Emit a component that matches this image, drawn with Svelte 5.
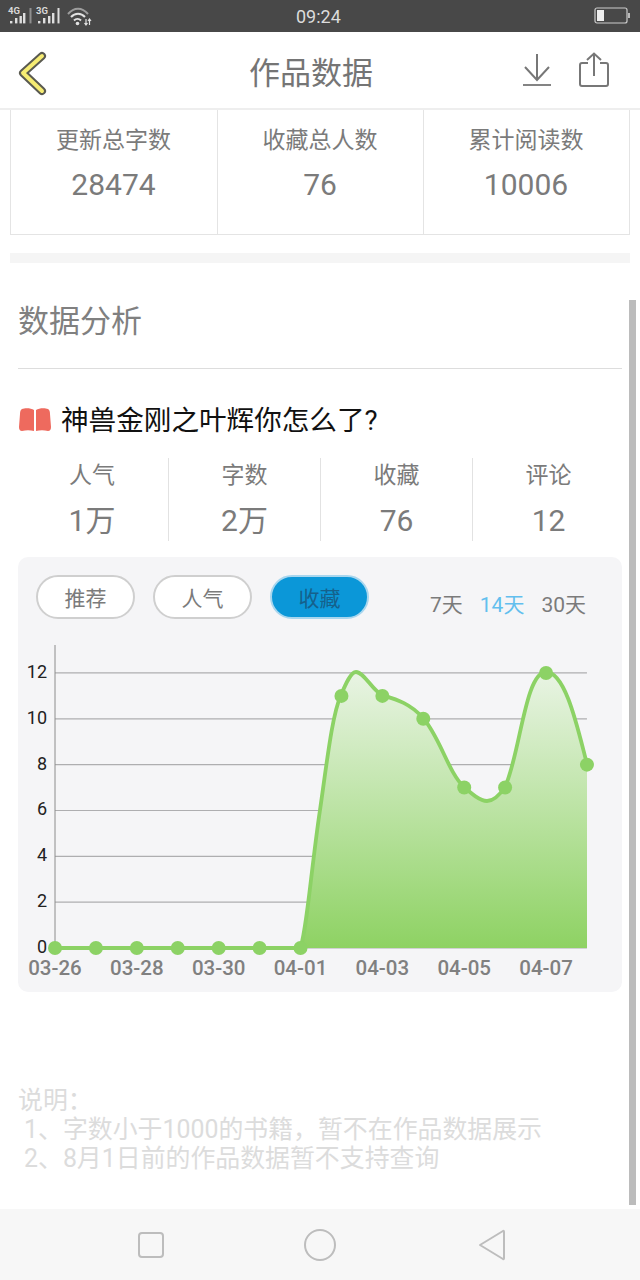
<script>
  const topStats = [
    { label: '更新总字数', value: '28474' },
    { label: '收藏总人数', value: '76' },
    { label: '累计阅读数', value: '10006' }
  ];
  const bookStats = [
    { label: '人气', value: '1万' },
    { label: '字数', value: '2万' },
    { label: '收藏', value: '76' },
    { label: '评论', value: '12' }
  ];
  const tabs = ['推荐', '人气', '收藏'];
  const ranges = ['7天', '14天', '30天'];

  // chart coordinates are relative to the card (card origin 18,557)
  const ox = 18;
  const oy = 557;
  const values = [0, 0, 0, 0, 0, 0, 0, 11, 11, 10, 7, 7, 12, 8];
  const xAt = (i) => 55 + i * 40.92 - ox;
  const yAt = (v) => 948 - v * 22.92 - oy;
  const ticks = [0, 2, 4, 6, 8, 10, 12];
  const dates = [
    { i: 0, t: '03-26' },
    { i: 2, t: '03-28' },
    { i: 4, t: '03-30' },
    { i: 6, t: '04-01' },
    { i: 8, t: '04-03' },
    { i: 10, t: '04-05' },
    { i: 12, t: '04-07' }
  ];
  const curve =
    'C306 938 311 870 320 810 C327 762 332 715 341 695 C346 683 351 672 356 672 C364 672 372 690 382 695 ' +
    'C395 699 410 703 423 718 C440 737 448 772 464 787 C472 794 480 801 487 801 ' +
    'C495 801 501 793 505 787 C520 755 525 672 546 672 C566 672 578 730 587 764';
</script>

<div class="page">
  <div class="status">
    <svg width="96" height="32" viewBox="0 0 96 32">
      <text x="8" y="14" class="net">4G</text>
      <g fill="#dedede">
        <rect x="10" y="21" width="2.4" height="2.4" />
        <rect x="15" y="18" width="2.4" height="5.4" />
        <rect x="19.5" y="16" width="2.4" height="7.4" />
        <rect x="23" y="13" width="2.4" height="10.4" />
        <rect x="29.5" y="8" width="2" height="15.4" fill="#8f8f8f" />
      </g>
      <text x="36" y="14" class="net">3G</text>
      <g fill="#dedede">
        <rect x="38" y="21" width="2.4" height="2.4" />
        <rect x="43" y="18" width="2.4" height="5.4" />
        <rect x="48" y="16" width="2.4" height="7.4" />
        <rect x="52" y="13" width="2.4" height="10.4" />
        <rect x="57.5" y="8" width="2" height="15.4" />
      </g>
      <g fill="none" stroke-width="2">
        <path d="M68 14 C74 7 82 7 88 14" stroke="#9d9d9d" />
        <path d="M71 17 C75 12.5 81 12.5 85 17" stroke="#e2e2e2" />
        <path d="M74 20.5 C76 18.5 79 18.5 81 20.5" stroke="#e2e2e2" />
      </g>
      <circle cx="77.5" cy="23.5" r="1.8" fill="#e2e2e2" />
      <path d="M86 19 V25 M84.5 23 L86 25 L87.5 23 M89.5 25 V19 M88 21 L89.5 19 L91 21" fill="none" stroke="#e2e2e2" stroke-width="1.2" />
    </svg>
    <span class="clock">09:24</span>
    <svg class="battery" width="38" height="18" viewBox="0 0 38 18">
      <rect x="1" y="1" width="32" height="15" rx="2" fill="none" stroke="#ccc" stroke-width="1.2" />
      <rect x="3" y="3" width="7" height="11" fill="#eee" />
      <rect x="34" y="6" width="2" height="5" fill="#bbb" />
    </svg>
  </div>

  <header class="topbar">
    <svg class="back" width="36" height="52" viewBox="0 0 36 52">
      <polyline points="28,12 9,29 28,47" fill="none" stroke="#5a5a50" stroke-width="8" stroke-linecap="round" stroke-linejoin="round" />
      <polyline points="28,12 9,29 28,47" fill="none" stroke="#f6ec73" stroke-width="4" stroke-linecap="round" stroke-linejoin="round" />
    </svg>
    <h1>作品数据</h1>
    <div class="actions">
      <svg width="30" height="34" viewBox="0 0 30 34" fill="none" stroke="#777" stroke-width="2">
        <path d="M15 1 V27" />
        <path d="M3 14 L15 27 L27 14" />
        <path d="M1 32 H29" stroke-width="1.8" />
      </svg>
      <svg width="32" height="36" viewBox="0 0 32 36" fill="none" stroke="#777" stroke-width="2">
        <path d="M10 11 H4 Q2 11 2 13 V32 Q2 34 4 34 H28 Q30 34 30 32 V13 Q30 11 28 11 H22" />
        <path d="M16 24 V2" />
        <path d="M9 8 L16 1.5 L23 8" />
      </svg>
    </div>
  </header>

  <main>
    <section class="totals">
      {#each topStats as s}
        <div class="total">
          <span class="total-label">{s.label}</span>
          <span class="total-value">{s.value}</span>
        </div>
      {/each}
    </section>

    <div class="band"></div>

    <h2>数据分析</h2>

    <div class="book-title">
      <svg width="34" height="24" viewBox="0 0 34 24">
        <path d="M16 2 C13 0 7 0 4 1 Q2 2 2 6 L1 19 Q1 23 4 23 C8 22 12 22 16 23 Z" fill="#ee6a5e" />
        <path d="M18 2 C21 0 27 0 30 1 Q32 2 32 6 L33 19 Q33 23 30 23 C26 22 22 22 18 23 Z" fill="#ee6a5e" />
      </svg>
      <span>神兽金刚之叶辉你怎么了?</span>
    </div>

    <div class="book-stats">
      {#each bookStats as s}
        <div class="book-stat">
          <span class="stat-label">{s.label}</span>
          <span class="stat-value">{s.value}</span>
        </div>
      {/each}
    </div>

    <div class="card">
      <div class="controls">
        <div class="tabs">
          {#each tabs as t, i}
            <button class="tab" class:active={i === 2}>{t}</button>
          {/each}
        </div>
        <div class="ranges">
          {#each ranges as r, i}
            <span class:on={i === 1}>{r}</span>
          {/each}
        </div>
      </div>

      <svg class="chart" width="604" height="347" viewBox="0 88 604 347">
        <defs>
          <linearGradient id="fill" x1="0" y1="0" x2="0" y2="1">
            <stop offset="0" stop-color="#e9f4e4" />
            <stop offset="1" stop-color="#8ed263" />
          </linearGradient>
        </defs>
        {#each ticks as t}
          <line x1={xAt(0)} x2={xAt(13)} y1={yAt(t)} y2={yAt(t)} stroke="#aeaeb0" stroke-width="1.2" />
          <text x="29" y={yAt(t) + 5} class="ytick" text-anchor="end">{t}</text>
        {/each}
        <line x1={xAt(0)} x2={xAt(0)} y1="88" y2={yAt(0)} stroke="#8c8c8c" stroke-width="1" />
        <g transform="translate({-ox} {-oy})">
          <path d="M300 948 {curve} V948 Z" fill="url(#fill)" />
          <path d="M55 948 H300 {curve}" fill="none" stroke="#8cd265" stroke-width="3.8" />
        </g>
        {#each values as v, i}
          <circle cx={xAt(i)} cy={yAt(v)} r="7" fill="#8cd265" />
        {/each}
        {#each dates as d}
          <text x={xAt(d.i)} y="418" class="xtick" text-anchor="middle">{d.t}</text>
        {/each}
      </svg>
    </div>

    <div class="notes">
      <p>说明：</p>
      <p class="item">1、字数小于1000的书籍，暂不在作品数据展示</p>
      <p class="item">2、8月1日前的作品数据暂不支持查询</p>
    </div>
  </main>

  <nav class="sysnav">
    <svg width="28" height="28" viewBox="0 0 28 28" fill="none" stroke="#bdbdbd" stroke-width="2">
      <rect x="2" y="2" width="24" height="24" rx="3" />
    </svg>
    <svg class="home" width="34" height="34" viewBox="0 0 34 34" fill="none" stroke="#bdbdbd" stroke-width="2">
      <circle cx="17" cy="17" r="15" />
    </svg>
    <svg width="28" height="32" viewBox="0 0 28 32" fill="none" stroke="#bdbdbd" stroke-width="2" stroke-linejoin="round">
      <path d="M25 2 Q26 1.5 26 3 V29 Q26 30.5 25 30 L2 16 Z" />
    </svg>
  </nav>

  <div class="scrollbar"></div>
</div>

<style>
  :global(body) {
    margin: 0;
    background: #fff;
  }

  .page {
    position: relative;
    width: 640px;
    height: 1280px;
    display: flex;
    flex-direction: column;
    overflow: hidden;
    font-family: Roboto, "Noto Sans CJK SC", sans-serif;
    color: #7b7b7b;
  }

  .status {
    height: 32px;
    flex: none;
    display: flex;
    align-items: center;
    justify-content: space-between;
    padding: 0 8px 0 0;
    background: #484848;
    position: relative;
  }

  .net {
    font-size: 9.5px;
    font-weight: 700;
    fill: #d8d8d8;
  }

  .clock {
    position: absolute;
    left: 296px;
    top: 6px;
    font-size: 18px;
    line-height: 22px;
    color: #dcdcdc;
  }

  .topbar {
    height: 76px;
    flex: none;
    display: flex;
    align-items: center;
    justify-content: space-between;
    padding: 0 30px 0 14px;
    border-bottom: 2px solid #eeeeee;
    background: #fff;
    position: relative;
  }

  .topbar h1 {
    position: absolute;
    left: 0;
    right: 18px;
    margin: 0;
    text-align: center;
    font-size: 31px;
    font-weight: 400;
    color: #757575;
  }

  .actions {
    display: flex;
    align-items: center;
    gap: 26px;
  }

  main {
    flex: 1;
    display: flex;
    flex-direction: column;
    padding: 0 18px;
  }

  .totals {
    margin: 0 -8px;
    height: 125px;
    flex: none;
    display: grid;
    grid-template-columns: repeat(3, 1fr);
    border: 1px solid #e4e4e4;
    border-top: none;
    box-sizing: border-box;
  }

  .total {
    display: flex;
    flex-direction: column;
    align-items: center;
    padding: 14px 1px 0 0;
    gap: 9px;
  }

  .total + .total {
    border-left: 1px solid #e4e4e4;
  }

  .total-label {
    font-size: 23px;
    line-height: 34px;
  }

  .total-value {
    font-size: 30px;
    line-height: 36px;
  }

  .band {
    margin: 18px -8px 0;
    height: 10px;
    flex: none;
    background: #f5f5f5;
  }

  h2 {
    margin: 0;
    height: 106px;
    flex: none;
    box-sizing: border-box;
    padding-top: 37px;
    border-bottom: 1px solid #dddddd;
    font-size: 31px;
    line-height: 44px;
    font-weight: 400;
    color: #808080;
  }

  .book-title {
    display: flex;
    align-items: center;
    gap: 9px;
    margin-top: 30px;
    height: 38px;
    flex: none;
    font-size: 27.6px;
    color: #111;
  }

  .book-title svg {
    margin-top: 4px;
  }

  .book-stats {
    margin: 21px -2px 0;
    display: grid;
    grid-template-columns: repeat(4, 1fr);
    height: 82px;
    flex: none;
  }

  .book-stat {
    display: flex;
    flex-direction: column;
    align-items: center;
    padding-top: 2px;
    gap: 9px;
  }

  .book-stat + .book-stat {
    border-left: 1px solid #e2e2e2;
  }

  .stat-label {
    font-size: 23px;
    line-height: 32px;
  }

  .stat-value {
    font-size: 30px;
    line-height: 40px;
  }

  .card {
    margin-top: 17px;
    height: 435px;
    flex: none;
    background: #f5f5f7;
    border-radius: 10px;
    display: flex;
    flex-direction: column;
    overflow: hidden;
  }

  .controls {
    height: 88px;
    flex: none;
    display: flex;
    justify-content: space-between;
    padding: 18px 36px 0 18px;
    box-sizing: border-box;
  }

  .tabs {
    display: flex;
    gap: 18px;
    align-items: flex-start;
  }

  .tab {
    width: 99px;
    height: 44px;
    padding: 0;
    border-radius: 22px;
    border: 2px solid #cfcfcf;
    background: #fff;
    color: #7b7b7b;
    font: inherit;
    font-size: 21px;
  }

  .tab.active {
    background: #0b97d8;
    border-color: #a8d6ee;
    color: #15618c;
  }

  .ranges {
    display: flex;
    gap: 17px;
    font-size: 21px;
    line-height: 28px;
    padding-top: 16px;
    color: #7b7b7b;
  }

  .ranges .on {
    color: #62bfee;
  }

  .chart {
    display: block;
    flex: none;
  }

  .ytick {
    font-size: 18px;
    fill: #222;
  }

  .xtick {
    font-size: 20.5px;
    font-weight: 500;
    fill: #808080;
  }

  .notes {
    margin-top: 94px;
    color: #dcdcdc;
    font-size: 24.9px;
    line-height: 29px;
  }

  .notes p {
    margin: 0;
  }

  .notes .item {
    padding-left: 6px;
  }

  .sysnav {
    height: 71px;
    flex: none;
    background: #f7f7f7;
    display: flex;
    align-items: center;
    justify-content: space-between;
    padding: 0 134px 0 137px;
    box-sizing: border-box;
  }

  .home {
    margin-right: 3px;
  }

  .scrollbar {
    position: absolute;
    left: 629px;
    top: 300px;
    width: 7px;
    height: 905px;
    background: #bcbcbc;
  }
</style>
